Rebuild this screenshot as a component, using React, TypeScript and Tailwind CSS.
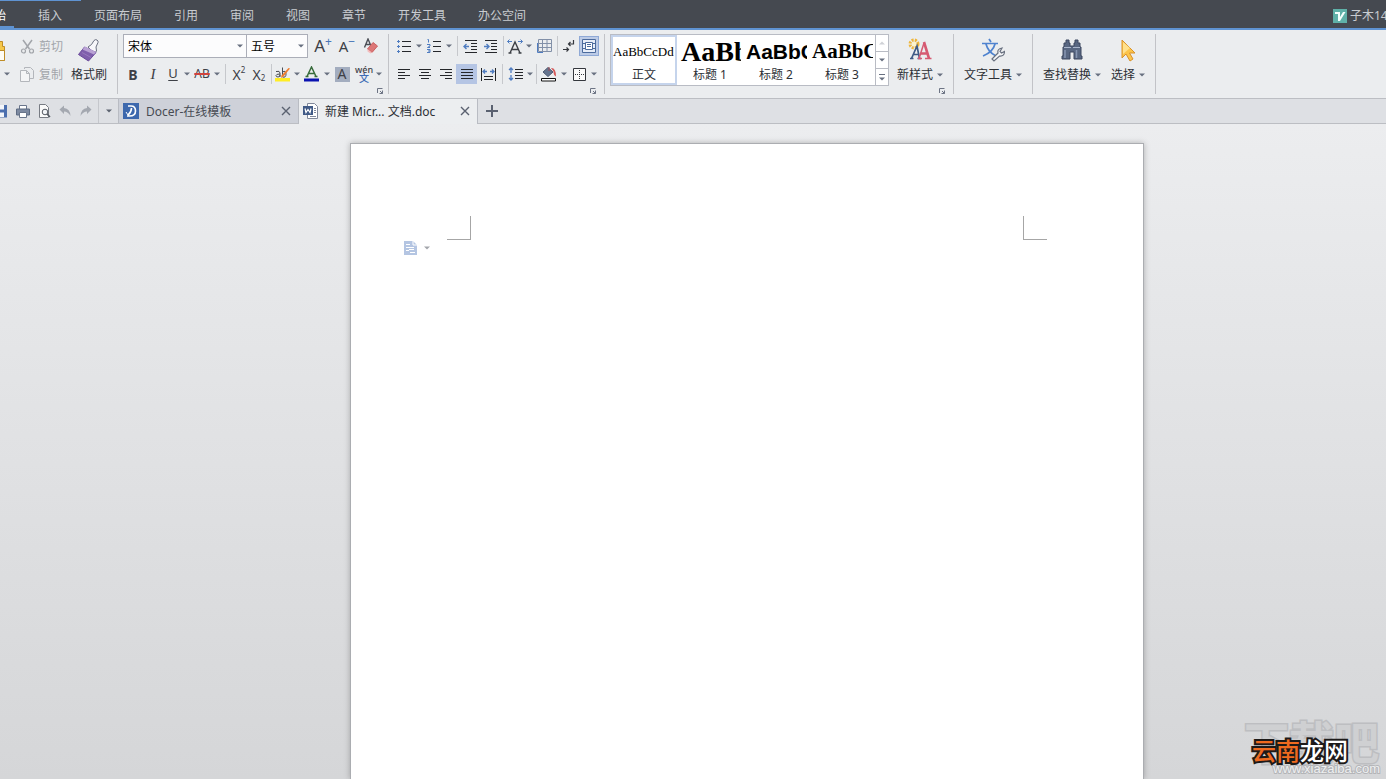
import type { ReactNode } from 'react'
import clsx from 'clsx'

const menuTabs = ['插入', '页面布局', '引用', '审阅', '视图', '章节', '开发工具', '办公空间']

const styles = [
  { name: '正文', sample: 'AaBbCcDd', font: 'font-[Liberation_Serif,serif] text-[13px]', active: true },
  { name: '标题 1', sample: 'AaBb', font: 'pl-0.5 font-[Liberation_Serif,serif] text-[28px] font-bold' },
  { name: '标题 2', sample: 'AaBbC', font: 'pl-px font-[Liberation_Sans,sans-serif] text-[21px] font-bold' },
  { name: '标题 3', sample: 'AaBbC', font: 'pl-px font-[Liberation_Serif,serif] text-[21px] font-bold' },
]

const Caret = ({ className = 'text-[#687080]' }: { className?: string }) => (
  <svg viewBox="0 0 6 4" className={clsx('h-1 w-1.5 shrink-0', className)} aria-hidden="true">
    <path d="M0 0.5h6L3 3.5z" fill="currentColor" />
  </svg>
)

const Drop = ({ label }: { label: string }) => (
  <button type="button" aria-label={label} className="flex h-5 w-2 items-center justify-center">
    <Caret />
  </button>
)

type ToolProps = { label: string; width?: string; className?: string; children: ReactNode }

const Tool = ({ label, width = 'w-5', className, children }: ToolProps) => (
  <button
    type="button"
    aria-label={label}
    title={label}
    className={clsx('flex h-5 shrink-0 items-center justify-center', width, className)}
  >
    {children}
  </button>
)

const Sep = ({ wide = false }: { wide?: boolean }) => (
  <span className={clsx('flex h-5 shrink-0 justify-center', wide ? 'w-2' : 'w-1')}>
    <span className="w-px bg-[#c6c8cc]" />
  </span>
)

const Divider = () => <span className="h-15 w-px shrink-0 bg-[#c2c3c7]" />

const Launcher = ({ label }: { label: string }) => (
  <button type="button" aria-label={label} className="mt-0.5 self-end">
    <svg viewBox="0 0 6 6" className="size-1.5" fill="none" stroke="#6d7484" aria-hidden="true">
      <path d="M0.5 5V0.5H5.5M2.5 5.5H5.5V2.5M3 3l2.5 2.5" />
    </svg>
  </button>
)

const Icon = ({ size = 16, children }: { size?: number; children: ReactNode }) => (
  <svg width={size} height={size} viewBox={`0 0 ${size} ${size}`} fill="none" className="shrink-0" aria-hidden="true">
    {children}
  </svg>
)

const Lines = ({ d }: { d: string }) => (
  <Icon>
    <path d={d} stroke="#25272b" />
  </Icon>
)

type BigProps = { label: string; icon: ReactNode; caret?: boolean }

const BigButton = ({ label, icon, caret = true }: BigProps) => (
  <button type="button" className="flex shrink-0 flex-col items-center">
    <span className="flex h-7 items-center pt-1">{icon}</span>
    <span className="flex h-6 items-center gap-1 pt-0.5 whitespace-nowrap">
      {label}
      {caret && <Caret />}
    </span>
  </button>
)

const Close = ({ label }: { label: string }) => (
  <button type="button" aria-label={label} className="flex w-4 items-center justify-center">
    <Icon size={10}>
      <path d="M1 1l8 8M9 1l-8 8" stroke="#5a6170" strokeWidth="1.4" />
    </Icon>
  </button>
)

const MenuBar = () => (
  <header className="flex h-[30px] shrink-0 justify-between overflow-hidden border-b-2 border-[#5f93d2] bg-[#454950] text-[#c9ccd1]">
    <nav className="flex" aria-label="功能区">
      <div className="flex w-[81px] border-t border-[#5f93d2]">
        <button type="button" className="mr-2 flex w-3.5 items-center justify-end overflow-hidden border-b-2 border-[#5f93d2] pr-2 pt-1 whitespace-nowrap text-white">
          开始
        </button>
        <button type="button" className="px-4 pt-0.5 whitespace-nowrap">{menuTabs[0]}</button>
      </div>
      {menuTabs.slice(1).map((tab, i) => (
        <button key={tab} type="button" className={clsx('px-4 pt-[3px] whitespace-nowrap', i === 0 && '-ml-[3px]')}>
          {tab}
        </button>
      ))}
    </nav>
    <button type="button" className="flex w-[53px] items-center gap-[3px] overflow-hidden pt-1 whitespace-nowrap">
      <Icon size={14}>
        <path d="M0 0h14v14H0z" fill="#5fb0a8" />
        <path d="M2 3h5v5l3-5h2.500L7 12H5V5H2z" fill="#f4fffd" />
      </Icon>
      子木14
    </button>
  </header>
)

const ClipboardGroup = () => (
  <div className="flex w-[117px] shrink-0">
    <button type="button" aria-label="粘贴" className="mr-2 flex w-3 flex-col overflow-hidden">
      <span className="flex h-7 items-center pt-1">
        <svg width="6" height="24" viewBox="0 0 6 24" fill="none" aria-hidden="true">
          <path d="M0 3.500h2.500v5h2v14H0" fill="#f6c84a" stroke="#bf8d27" />
          <path d="M0 12.500h4.500v10H0" fill="#fffdf5" stroke="#bf8d27" />
        </svg>
      </span>
      <span className="flex h-6 w-full items-center justify-end pr-0.5">
        <Caret />
      </span>
    </button>
    <div className="flex flex-col gap-1 text-[#a2a5aa]">
      <button type="button" className="flex h-6 items-center gap-1 pt-px">
        <Icon size={15}>
          <path d="M3 1l6.500 9M12 1L5.500 10" stroke="#a2a5aa" strokeWidth="1.500" />
          <circle cx="3.500" cy="12" r="2" stroke="#a2a5aa" strokeWidth="1.200" />
          <circle cx="11.500" cy="12" r="2" stroke="#a2a5aa" strokeWidth="1.200" />
        </Icon>
        剪切
      </button>
      <button type="button" className="flex h-6 items-center gap-1 pt-px">
        <Icon size={15}>
          <path d="M4.500 2V0.500h6l3 3v8H10" stroke="#b3b6bb" />
          <path d="M0.500 3.500h6l3 3v8h-9zM6.500 3.500v3h3" fill="#f4f5f6" stroke="#b3b6bb" />
        </Icon>
        复制
      </button>
    </div>
    <div className="ml-2 flex">
      <BigButton
        label="格式刷"
        caret={false}
        icon={
          <Icon size={24}>
            <path d="M11 9l3.500-2.500L17 2.500q1.500-1.500 3-.5t1 2.500l-2 4.500.5 4-2 2.500z" fill="#f7f7fa" stroke="#6a6f80" />
            <path d="M7.500 9L19 14.500 11.500 23 1.500 16.500z" fill="#7f5fac" stroke="#69499a" />
            <path d="M8 8.500l11 5.500-2 2.500L5.500 11.500z" fill="#b9a2d4" />
            <path d="M5 14.500l9 5" stroke="#9779bd" />
          </Icon>
        }
      />
    </div>
  </div>
)

const Picker = ({ label, value, width }: { label: string; value: string; width: string }) => (
  <label className={clsx('relative flex h-6', width)}>
    <select aria-label={label} defaultValue={value} className="w-full appearance-none border border-[#abaeb8] bg-[#fcfcfd] pt-0.5 pl-1 text-black">
      <option>{value}</option>
    </select>
    <span className="pointer-events-none absolute inset-y-0 right-1 flex items-center">
      <Caret />
    </span>
  </label>
)

const FontGroup = () => (
  <div className="flex shrink-0 flex-col px-[5px] text-[#3d4046]">
    <div className="flex h-6 items-center">
      <Picker label="字体" value="宋体" width="w-[124px]" />
      <div className="-ml-px flex">
        <Picker label="字号" value="五号" width="w-[62px]" />
      </div>
      <div className="ml-[3px] flex">
        <Tool label="增大字号" width="w-6">
          <span className="text-[17px] leading-5">A</span>
          <span className="self-start text-[12px] leading-3 text-[#4876b8]">+</span>
        </Tool>
        <Tool label="减小字号" width="w-6">
          <span className="text-[15px] leading-5">A</span>
          <span className="self-start text-[12px] leading-3 text-[#4876b8]">−</span>
        </Tool>
        <Tool label="清除格式" width="w-6">
          <Icon>
            <path d="M1.500 9.500L5 1l3 7M2.500 6.500h4.500" stroke="#4b4e55" strokeWidth="1.400" />
            <path d="M10 4.500l4.500 3.500-5.500 6.500-4.500-3.500z" fill="#dc7777" stroke="#cb6060" />
            <path d="M4.500 11l4.500 3.500L7.500 15.500l-3-2z" fill="#f3bcbc" />
          </Icon>
        </Tool>
      </div>
    </div>
    <div className="mt-1 flex h-6 items-center">
      <Tool label="加粗"><b className="text-[14px]">B</b></Tool>
      <Tool label="倾斜"><i className="font-[Liberation_Serif,serif] text-[15px]">I</i></Tool>
      <Tool label="下划线"><span className="text-[13px] underline underline-offset-2">U</span></Tool>
      <Drop label="下划线类型" />
      <Tool label="删除线" width="w-[22px]">
        <span className="line-through decoration-[#d0433d] decoration-2">AB</span>
      </Tool>
      <Drop label="删除线选项" />
      <Sep wide />
      <Tool label="上标"><span className="text-[14px]">X</span><span className="self-start text-[8px] leading-3">2</span></Tool>
      <Tool label="下标"><span className="text-[14px]">X</span><span className="self-end text-[8px] leading-3">2</span></Tool>
      <Sep />
      <Tool label="突出显示">
        <Icon>
          <path d="M0 12h15v3.500H0z" fill="#ffed24" />
          <path d="M1 5.500q4-1 4 1.500v4M5 8Q1 8 1 9.500T3 11q2 0 2-2M7.500 1.500V11M7.500 6Q11 4 11 8t-3.500 3" stroke="#4b4e55" />
          <path d="M15 2.500l-6.500 8-2.500 1.500.5-2.500 7-7.500z" fill="#ef7d2e" />
        </Icon>
      </Tool>
      <Drop label="突出显示颜色" />
      <Tool label="字体颜色" width="w-[22px]">
        <Icon>
          <path d="M3 10.500L7.500 1 12 10.500M4.500 7.500h6M1.500 10.500h3M10.500 10.500h3" stroke="#376b3b" strokeWidth="1.500" />
          <path d="M0 12.500h15v3H0z" fill="#0a12b0" />
        </Icon>
      </Tool>
      <Drop label="选择字体颜色" />
      <Tool label="字符底纹" width="w-[22px]">
        <span className="flex size-[15px] items-center justify-center bg-[#a3adbf] text-[14px] leading-none">A</span>
      </Tool>
      <Tool label="拼音指南" width="w-[22px]">
        <span className="flex flex-col items-center text-[9px] leading-2 font-medium">
          <span>wén</span>
          <span className="text-[10px] text-[#3f6cb5]">文</span>
        </span>
      </Tool>
      <Drop label="拼音选项" />
    </div>
    <Launcher label="字体设置" />
  </div>
)

const ParagraphGroup = () => (
  <div className="flex shrink-0 flex-col pr-[5px] pl-1">
    <div className="flex h-6 items-center">
      <Tool label="项目符号" width="w-[22px]">
        <Icon>
          <path d="M6 3.500h9M6 8.500h9M6 13.500h9" stroke="#25272b" />
          <path d="M1 3.500h3M2.500 2v3M1 8.500h3M2.500 7v3M1 13.500h3M2.500 12v3" stroke="#4f7cc0" />
        </Icon>
      </Tool>
      <Drop label="项目符号样式" />
      <Tool label="编号" width="w-[22px]">
        <Icon>
          <path d="M7 3.500h8M7 8.500h8M7 13.500h8" stroke="#25272b" />
          <path d="M1.500 1.500h1V4.500M1 6.500h3v1.500L1.500 9.500H4M1 11.500h3v3H1M2 13h2" stroke="#4f7cc0" />
        </Icon>
      </Tool>
      <Drop label="编号样式" />
      <Sep wide />
      <Tool label="减少缩进量">
        <Icon>
          <path d="M2 2.500h12M8 5.500h6M8 8.500h6M8 11.500h6M2 14.500h12" stroke="#25272b" />
          <path d="M1 8.500h5M3.500 6L1 8.500 3.500 11" stroke="#4f7cc0" strokeWidth="1.400" />
        </Icon>
      </Tool>
      <Tool label="增加缩进量">
        <Icon>
          <path d="M2 2.500h12M8 5.500h6M8 8.500h6M8 11.500h6M2 14.500h12" stroke="#25272b" />
          <path d="M1 8.500h5M3.500 6L6 8.500 3.500 11" stroke="#4f7cc0" strokeWidth="1.400" />
        </Icon>
      </Tool>
      <Sep />
      <Tool label="中文版式">
        <Icon>
          <path d="M3 15L8 4l5 11M4.500 11.500h7M1.500 15h3M11.500 15h3" stroke="#3d4046" strokeWidth="1.400" />
          <path d="M0.500 3.500H5M2.500 1.500l-2 2 2 2M11 3.500h4.500M13.500 1.500l2 2-2 2" stroke="#4f7cc0" />
        </Icon>
      </Tool>
      <Drop label="中文版式选项" />
      <Tool label="网格" width="w-[22px]">
        <Icon>
          <path d="M2.500 1.500h13v12h-13zM2.500 5.500h13M2.500 9.500h13M6.500 1.500v12M11 1.500v12" stroke="#8290a8" />
          <path d="M1.500 5v9.500H7" stroke="#4f7cc0" />
        </Icon>
      </Tool>
      <Sep />
      <Tool label="制表位">
        <Icon>
          <path d="M12.500 2v4H8M9.500 4L7.500 6l2 2M2 11.500h6M5.500 9.500l2 2-2 2" stroke="#34373d" strokeWidth="1.200" />
        </Icon>
      </Tool>
      <Tool label="显示段落布局" className="border border-[#8fa9d6] bg-[#bccbe6]">
        <Icon>
          <path d="M1.500 1.500h13v13h-13z" fill="#e7edf8" stroke="#4c6b9d" />
          <path d="M4.500 4.500h7v7h-7z" fill="#fff" stroke="#4c6b9d" />
          <path d="M6 6.500h4M6 8.500h4M1 5.500h3M1 10.500h3M12 5.500h3M12 10.500h3" stroke="#4c6b9d" />
        </Icon>
      </Tool>
    </div>
    <div className="mt-1 flex h-6 items-center">
      <Tool label="左对齐" width="w-[21px]"><Lines d="M2 3.500h12M2 6.500h7M2 9.500h12M2 12.500h7" /></Tool>
      <Tool label="居中" width="w-[21px]"><Lines d="M2 3.500h12M4 6.500h8M2 9.500h12M4 12.500h8" /></Tool>
      <Tool label="右对齐" width="w-[21px]"><Lines d="M2 3.500h12M7 6.500h7M2 9.500h12M7 12.500h7" /></Tool>
      <Tool label="两端对齐" width="w-[21px]" className="bg-[#b5c5e4]"><Lines d="M2 3.500h12M2 6.500h12M2 9.500h12M2 12.500h12" /></Tool>
      <Tool label="分散对齐" width="w-[21px]">
        <Icon>
          <path d="M1.500 2v13M15.500 2v13M4 10.500h9M4 13.500h9" stroke="#25272b" />
          <path d="M3 5.500h4M5 3.500l-2 2 2 2M10 5.500h4M12 3.500l2 2-2 2" stroke="#4f7cc0" strokeWidth="1.300" />
        </Icon>
      </Tool>
      <Sep wide />
      <Tool label="行距">
        <Icon>
          <path d="M7 3.500h8M7 6.500h8M7 9.500h8M7 12.500h8" stroke="#25272b" />
          <path d="M3 2v5M1 4l2-2 2 2M3 9v5M1 12l2 2 2-2" stroke="#4f7cc0" strokeWidth="1.300" />
        </Icon>
      </Tool>
      <Drop label="行距选项" />
      <Sep />
      <Tool label="底纹颜色" width="w-[22px]">
        <Icon>
          <path d="M7 1.500l5 4.500-5 4.500-5-4.500z" fill="#66758f" stroke="#4e5b73" />
          <path d="M8 1v4" stroke="#a04a52" />
          <path d="M10 2q5-.5 5 8.500-2.500-1-2.500-5z" fill="#d45a5a" />
          <path d="M0.500 12.500h14v2.500H0.500z" fill="#fff" stroke="#111" />
        </Icon>
      </Tool>
      <Drop label="选择底纹颜色" />
      <Tool label="边框" width="w-[22px]">
        <Icon>
          <path d="M2.500 2.500h12v12h-12z" fill="#fafafa" stroke="#34373d" />
          <path d="M8.500 4v9M4 8.500h9" stroke="#34373d" strokeDasharray="1 1" />
        </Icon>
      </Tool>
      <Drop label="选择边框" />
    </div>
    <div className="flex flex-col pr-[3px]">
      <Launcher label="段落设置" />
    </div>
  </div>
)

const StylesGroup = () => (
  <div className="flex shrink-0 flex-col pr-2 pl-[5px]">
    <div className="flex">
      <div className="flex h-13 border border-[#b9bcc4] bg-white">
        {styles.map(({ name, sample, font, active }) => (
          <button
            key={name}
            type="button"
            className={clsx('flex w-[66px] flex-col overflow-hidden border-2', active ? 'border-[#c5d4ec]' : 'border-transparent')}
          >
            <span className={clsx('flex h-8 w-full items-center overflow-hidden whitespace-nowrap text-black', font)}>
              {sample}
            </span>
            <span className="w-full text-center leading-4">{name}</span>
          </button>
        ))}
        <div className="flex w-[13px] flex-col divide-y divide-[#b9bcc4] border-l border-[#b9bcc4]">
          <button type="button" aria-label="上一行" className="flex flex-1 items-center justify-center">
            <Caret className="rotate-180 text-[#d0d2d7]" />
          </button>
          <button type="button" aria-label="下一行" className="flex flex-1 items-center justify-center">
            <Caret />
          </button>
          <button type="button" aria-label="更多样式" className="flex flex-1 flex-col items-center justify-center gap-0.5">
            <span className="h-px w-1.5 bg-[#687080]" />
            <Caret />
          </button>
        </div>
      </div>
      <div className="flex pr-0.5 pl-2">
        <BigButton
          label="新样式"
          icon={
            <Icon size={24}>
              <circle cx="6" cy="6" r="4" stroke="#efb63c" strokeWidth="3" strokeDasharray="2 1.200" />
              <circle cx="6" cy="6" r="2" fill="#fff4c8" />
              <path d="M3.500 20.500L9 8l2.500 12.500M5 16.500h5.500M2 20.500h3.500M9.500 20.500H13" stroke="#3f5a85" strokeWidth="1.700" />
              <path d="M11 20.500L16 5" stroke="#d65a72" strokeWidth="1.500" />
              <path d="M16 4l5 16.500M12.500 15.500h7" stroke="#d65a72" strokeWidth="2.600" />
              <path d="M10 20.500h4M17 20.500h6.500" stroke="#d65a72" strokeWidth="1.500" />
            </Icon>
          }
        />
      </div>
    </div>
    <Launcher label="样式设置" />
  </div>
)

const TextToolsGroup = () => (
  <div className="flex shrink-0 px-[10px]">
    <BigButton
      label="文字工具"
      icon={
        <Icon size={24}>
          <path d="M8 1l2 3M1 5.500h16M5 6q2 8 10 12M14 6q-2 8-12 12" stroke="#4f83cf" strokeWidth="1.700" />
          <path d="M11 21l6-6q-1-4 4-5l-2 3.500 1.500 1.500 3-1.500q0 5-5 4.500l-5.500 5z" fill="#f5f6f8" stroke="#697180" strokeWidth="1.200" />
        </Icon>
      }
    />
  </div>
)

const EditGroup = () => (
  <div className="flex shrink-0 gap-[10px] px-[10px]">
    <BigButton
      label="查找替换"
      icon={
        <Icon size={24}>
          <path d="M4 5h2V2h3v3h1v3h4V5h1V2h3v3h2v4h1v9h1v3h-8v-7h-4v7H2v-3h1V9h1z" fill="#586782" stroke="#3c4860" />
          <path d="M4 9.500h7M13 9.500h7" stroke="#a9b6cc" />
          <path d="M5 12v8M16.500 12v8" stroke="#8796b2" strokeWidth="1.500" />
        </Icon>
      }
    />
    <BigButton
      label="选择"
      icon={
        <Icon size={24}>
          <path d="M6 2v18l4-4 4 7 3-2-3.500-6H19z" fill="#fcc449" stroke="#d8922c" strokeLinejoin="round" />
          <path d="M7 4v12l7-6z" fill="#ffe08c" />
        </Icon>
      }
    />
  </div>
)

const TabBar = () => (
  <div className="flex h-[25px] shrink-0 border-b border-[#bcbec3] bg-[#dee0e4] text-[#474b53]">
    <div className="flex items-center">
      <button type="button" aria-label="保存" className="flex w-2 justify-end overflow-hidden">
        <Icon size={14}>
          <path d="M0.500 1h12.500v12.500H0.500z" fill="#4c6fae" />
          <path d="M3 1h7v4.500H3zM3 8.500h7V13H3z" fill="#f4f6fa" />
        </Icon>
      </button>
      <Tool label="打印" width="ml-1 w-[21px]">
        <Icon size={14}>
          <path d="M3.500 5V1.500h7V5" fill="#fff" stroke="#69758b" />
          <path d="M0.500 5h13v6H0.500z" fill="#7d8aa1" stroke="#5f6c83" />
          <path d="M3.500 8.500h7v5h-7z" fill="#fff" stroke="#69758b" />
        </Icon>
      </Tool>
      <Tool label="打印预览" width="w-[21px]">
        <Icon size={14}>
          <path d="M2.500 0.500h6l3 3v10h-9z" fill="#fafafa" stroke="#777b83" />
          <circle cx="8" cy="8" r="2.800" fill="#f2f4f7" stroke="#555a63" />
          <path d="M10 10l3 3" stroke="#555a63" strokeWidth="1.600" />
        </Icon>
      </Tool>
      <Tool label="撤销" width="w-[21px]">
        <Icon size={14}>
          <path d="M1.500 5.500L6 1.500v2.500q6 .5 6.500 8Q10 7.500 6 7.500V10z" fill="#a4a8b0" />
        </Icon>
      </Tool>
      <Tool label="恢复" width="w-[21px]">
        <Icon size={14}>
          <path d="M12.500 5.500L8 1.500v2.500q-6 .5-6.500 8Q4 7.500 8 7.500V10z" fill="#a4a8b0" />
        </Icon>
      </Tool>
      <span className="ml-0.5 h-6 w-px bg-[#c5c7cc]" />
      <button type="button" aria-label="自定义快速访问" className="flex h-6 w-[19px] items-center justify-center">
        <Caret className="text-[#5d6370]" />
      </button>
    </div>
    <div className="flex w-[180px] items-center border-l border-[#b9bcc3] bg-[#ced1d9] pr-1 pl-1">
      <Icon>
        <path d="M0 0h16v16H0z" fill="#3d68ad" />
        <path d="M5 3H8q4.500 0 4.500 5t-6 5H4M8.500 5q0 4-3.500 7" stroke="#fff" strokeWidth="1.600" />
        <path d="M3 9l2 3" stroke="#fff" />
      </Icon>
      <button type="button" className="ml-[7px] flex-1 pt-0.5 text-left whitespace-nowrap">Docer-在线模板</button>
      <Close label="关闭 Docer" />
    </div>
    <div className="-mb-px flex w-[180px] items-center border-x border-[#b9bcc3] bg-[#eceef0] pr-1 pb-px pl-1">
      <Icon>
        <path d="M4.500 0.500h7l3 3v12h-10z" fill="#fff" stroke="#80889a" />
        <path d="M11 5.500h2M11 7.500h2M11 9.500h2M7 13.500h6" stroke="#80889a" />
        <path d="M0 3h10v9H0z" fill="#405a86" />
        <path d="M2 5.500l1 4 2-3 2 3 1-4" stroke="#fff" strokeWidth="1.200" />
      </Icon>
      <button type="button" className="ml-1.5 flex-1 pt-0.5 text-left whitespace-nowrap text-[#2d3036]">新建 Micr... 文档.doc</button>
      <Close label="关闭文档" />
    </div>
    <button type="button" aria-label="新建标签" className="flex w-7 items-center justify-center">
      <Icon size={12}>
        <path d="M6 0v12M0 6h12" stroke="#5a6170" strokeWidth="2" />
      </Icon>
    </button>
  </div>
)

const Workspace = () => (
  <main className="grid flex-1 grid-cols-[350fr_794px_242fr] bg-linear-to-b from-[#ecedef] to-[#d5d6d8] pt-[19px]">
    <article className="col-start-2 border border-b-0 border-[#abadb1] bg-white pt-18 shadow-[0_0_6px_rgba(0,0,0,0.25)]">
      <div className="flex justify-between px-24">
        <span className="size-6 border-r border-b border-[#a6a6a6]" />
        <span className="size-6 border-b border-l border-[#a6a6a6]" />
      </div>
      <button type="button" aria-label="段落布局" className="ml-[53px] flex h-4 items-center gap-1.5">
        <Icon size={14}>
          <path d="M0 0h9l4 4v10H0z" fill="#b4c5e2" />
          <path d="M9 0v4h4" stroke="#fff" />
          <path d="M2 3.500h4M2 6.500h8M2 9.500h3M6 11.500h5M5 8.500h5" stroke="#fff" />
        </Icon>
        <Caret className="text-[#a3a6ab]" />
      </button>
    </article>
  </main>
)

const Watermark = () => (
  <div className="pointer-events-none absolute right-1.5 bottom-0 h-16 w-34 whitespace-nowrap">
    <div className="absolute bottom-2 left-0 text-[45px] leading-[56px] font-bold text-[#cfd0d2] [-webkit-text-stroke:3px_#bdbec1] [paint-order:stroke_fill]">下载吧</div>
    <div className="absolute right-0 bottom-0 font-[Liberation_Sans,sans-serif] text-[13px] leading-5 text-[#eeeff0] [-webkit-text-stroke:2px_#b4b5b8] [paint-order:stroke_fill]">
      www.xiazaiba.com
    </div>
    <div className="absolute top-[22px] left-2 text-[24px] leading-7 font-medium text-white [-webkit-text-stroke:4px_#1d1a19] [paint-order:stroke_fill]">
      <span className="text-[#ef6a1f]">云南</span>龙网
    </div>
  </div>
)

export default function App() {
  return (
    <div className="relative flex min-h-screen flex-col overflow-hidden font-['Noto_Sans','Noto_Sans_CJK_SC',sans-serif] text-[12px] text-[#2d3036]">
      <MenuBar />
      <div className="flex h-[69px] shrink-0 overflow-hidden border-b border-[#bcbec3] bg-[#ebedef] pt-1">
        <ClipboardGroup />
        <Divider />
        <FontGroup />
        <Divider />
        <ParagraphGroup />
        <Divider />
        <StylesGroup />
        <Divider />
        <TextToolsGroup />
        <Divider />
        <EditGroup />
        <Divider />
      </div>
      <TabBar />
      <Workspace />
      <Watermark />
    </div>
  )
}
